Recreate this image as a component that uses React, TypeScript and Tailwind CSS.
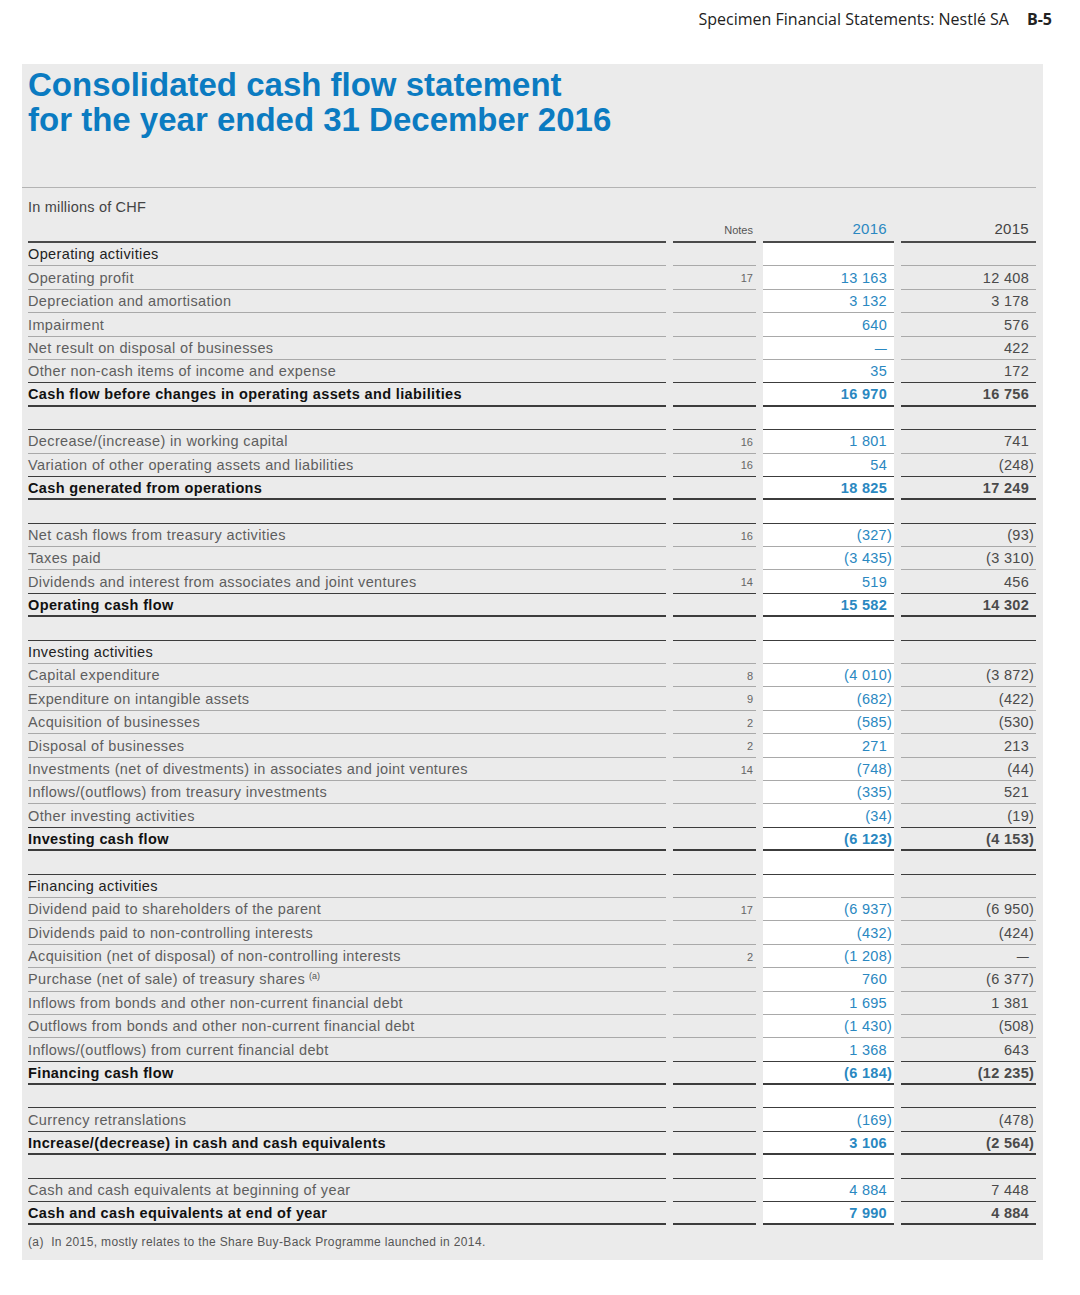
import React from 'react';

type Kind = 'head' | 'item' | 'last' | 'total' | 'blank';

type Row = {
  kind: Kind;
  label?: string;
  note?: string;
  a?: string;
  b?: string;
  sup?: boolean;
};

const rows: Row[] = [
  { kind: 'head', label: 'Operating activities' },
  { kind: 'item', label: 'Operating profit', note: '17', a: '13 163', b: '12 408' },
  { kind: 'item', label: 'Depreciation and amortisation', a: '3 132', b: '3 178' },
  { kind: 'item', label: 'Impairment', a: '640', b: '576' },
  { kind: 'item', label: 'Net result on disposal of businesses', a: '—', b: '422' },
  { kind: 'last', label: 'Other non-cash items of income and expense', a: '35', b: '172' },
  { kind: 'total', label: 'Cash flow before changes in operating assets and liabilities', a: '16 970', b: '16 756' },
  { kind: 'blank' },
  { kind: 'item', label: 'Decrease/(increase) in working capital', note: '16', a: '1 801', b: '741' },
  { kind: 'last', label: 'Variation of other operating assets and liabilities', note: '16', a: '54', b: '(248)' },
  { kind: 'total', label: 'Cash generated from operations', a: '18 825', b: '17 249' },
  { kind: 'blank' },
  { kind: 'item', label: 'Net cash flows from treasury activities', note: '16', a: '(327)', b: '(93)' },
  { kind: 'item', label: 'Taxes paid', a: '(3 435)', b: '(3 310)' },
  { kind: 'last', label: 'Dividends and interest from associates and joint ventures', note: '14', a: '519', b: '456' },
  { kind: 'total', label: 'Operating cash flow', a: '15 582', b: '14 302' },
  { kind: 'blank' },
  { kind: 'head', label: 'Investing activities' },
  { kind: 'item', label: 'Capital expenditure', note: '8', a: '(4 010)', b: '(3 872)' },
  { kind: 'item', label: 'Expenditure on intangible assets', note: '9', a: '(682)', b: '(422)' },
  { kind: 'item', label: 'Acquisition of businesses', note: '2', a: '(585)', b: '(530)' },
  { kind: 'item', label: 'Disposal of businesses', note: '2', a: '271', b: '213' },
  { kind: 'item', label: 'Investments (net of divestments) in associates and joint ventures', note: '14', a: '(748)', b: '(44)' },
  { kind: 'item', label: 'Inflows/(outflows) from treasury investments', a: '(335)', b: '521' },
  { kind: 'last', label: 'Other investing activities', a: '(34)', b: '(19)' },
  { kind: 'total', label: 'Investing cash flow', a: '(6 123)', b: '(4 153)' },
  { kind: 'blank' },
  { kind: 'head', label: 'Financing activities' },
  { kind: 'item', label: 'Dividend paid to shareholders of the parent', note: '17', a: '(6 937)', b: '(6 950)' },
  { kind: 'item', label: 'Dividends paid to non-controlling interests', a: '(432)', b: '(424)' },
  { kind: 'item', label: 'Acquisition (net of disposal) of non-controlling interests', note: '2', a: '(1 208)', b: '—' },
  { kind: 'item', label: 'Purchase (net of sale) of treasury shares', sup: true, a: '760', b: '(6 377)' },
  { kind: 'item', label: 'Inflows from bonds and other non-current financial debt', a: '1 695', b: '1 381' },
  { kind: 'item', label: 'Outflows from bonds and other non-current financial debt', a: '(1 430)', b: '(508)' },
  { kind: 'last', label: 'Inflows/(outflows) from current financial debt', a: '1 368', b: '643' },
  { kind: 'total', label: 'Financing cash flow', a: '(6 184)', b: '(12 235)' },
  { kind: 'blank' },
  { kind: 'last', label: 'Currency retranslations', a: '(169)', b: '(478)' },
  { kind: 'total', label: 'Increase/(decrease) in cash and cash equivalents', a: '3 106', b: '(2 564)' },
  { kind: 'blank' },
  { kind: 'last', label: 'Cash and cash equivalents at beginning of year', a: '4 884', b: '7 448' },
  { kind: 'total', label: 'Cash and cash equivalents at end of year', a: '7 990', b: '4 884' },
];

const lineFor = (kind: Kind) => {
  if (kind === 'total') return 'border-b-2 border-[#3c3c3c]';
  if (kind === 'last' || kind === 'blank') return 'border-b border-[#3c3c3c]';
  return 'border-b border-[#a9a9a9]';
};

const Num = ({ v }: { v?: string }) => {
  if (!v) return null;
  if (v === '—') return <span className="text-[12px]">—</span>;
  if (v.startsWith('(') && v.endsWith(')')) {
    return (
      <>
        {v.slice(0, -1)}
        <span className="inline-block w-0">)</span>
      </>
    );
  }
  return <>{v}</>;
};

const TableRow = ({ row }: { row: Row }) => {
  const line = lineFor(row.kind);
  const cell = `h-[23.4px] flex items-center pt-[2px] ${line}`;
  const bold = row.kind === 'total';
  const labelColor =
    row.kind === 'total' ? 'text-[#111] font-bold' : row.kind === 'head' ? 'text-[#222]' : 'text-[#5e5e5e]';
  return (
    <>
      <div className={`${cell} ${labelColor} tracking-[0.37px] whitespace-nowrap`}>
        {row.label}
        {row.sup && <sup className="ml-[4px] text-[9px] text-[#555] -top-[4px] tracking-normal">(a)</sup>}
      </div>
      <div className={`${cell} justify-end pr-[3px] text-[11px] text-[#666]`}>{row.note}</div>
      <div
        className={`${cell} justify-end pr-[7px] bg-white text-[#2a88c1] tracking-[0.3px] ${bold ? 'font-bold text-[#1f80bc]' : ''}`}
      >
        <Num v={row.a} />
      </div>
      <div className={`${cell} justify-end pr-[7px] text-[#4a4a4a] tracking-[0.3px] ${bold ? 'font-bold text-[#3a3a3a]' : ''}`}>
        <Num v={row.b} />
      </div>
    </>
  );
};

export default function App() {
  return (
    <div className="min-h-[1295px] bg-white font-['Liberation_Sans',Arial,sans-serif]">
      <div className="h-[64px] flex justify-end items-start pt-[7px] pr-[28px] gap-[18px] font-['Open_Sans','Noto_Sans',sans-serif] text-[16px] text-[#222]">
        <span>Specimen Financial Statements: Nestlé SA</span>
        <span className="font-bold">B-5</span>
      </div>

      <div className="ml-[22px] w-[1021px] bg-[#ebebeb] pl-[6px] pr-[7px] pb-[9px]">
        <h1 className="pt-[3px] text-[33px] leading-[35px] font-bold text-[#0b7bc1]">
          Consolidated cash flow statement
          <br />
          for the year ended 31 December 2016
        </h1>

        <div className="-ml-[6px] mt-[50px] border-t border-[#b3b3b3]" />

        <div className="pt-[9px] text-[14.5px] leading-[20px] text-[#444] tracking-[0.2px]">In millions of CHF</div>

        <div className="grid grid-cols-[638px_83px_131px_135px] gap-x-[7px] text-[14.5px]">
          <div className="h-[26px] border-b-2 border-[#4a4a4a]" />
          <div className="h-[26px] flex items-end justify-end pr-[3px] pb-[3px] border-b-2 border-[#4a4a4a] text-[11px] text-[#555]">
            Notes
          </div>
          <div className="h-[26px] flex items-end justify-end pr-[7px] pb-[1px] border-b-2 border-[#4a4a4a] text-[#2a88c1] text-[15px] tracking-[0.3px]">
            2016
          </div>
          <div className="h-[26px] flex items-end justify-end pr-[7px] pb-[1px] border-b-2 border-[#4a4a4a] text-[#444] text-[15px] tracking-[0.3px]">
            2015
          </div>
          {rows.map((r, i) => (
            <TableRow key={i} row={r} />
          ))}
        </div>

        <div className="pt-[8px] text-[12px] text-[#555] tracking-[0.36px]">
          (a)&nbsp;&nbsp;In 2015, mostly relates to the Share Buy-Back Programme launched in 2014.
        </div>
      </div>
    </div>
  );
}
